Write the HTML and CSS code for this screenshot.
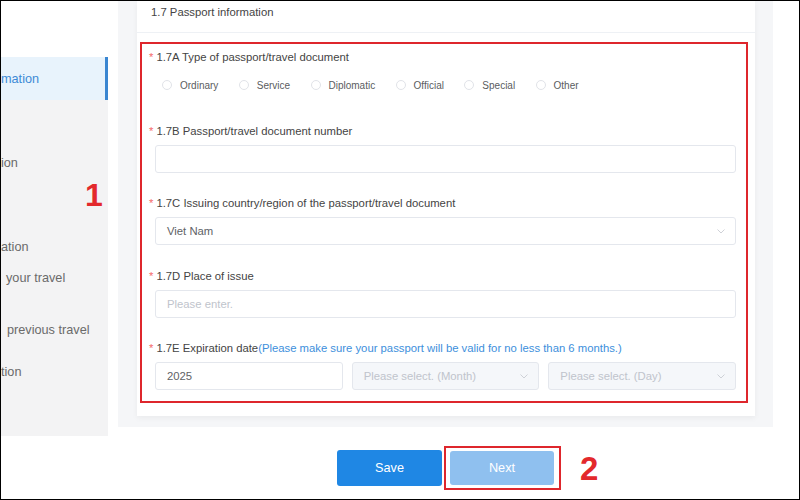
FILE: index.html
```html
<!DOCTYPE html>
<html lang="en">
<head>
<meta charset="utf-8">
<title>Passport information</title>
<link rel="stylesheet" href="styles.css">
</head>
<body>
<div class="frame">
  <aside class="sidebar">
    <div class="nav">
      <div class="nav-item active">mation</div>
      <div class="nav-item n2">ion</div>
      <div class="nav-item n3">ation</div>
      <div class="nav-item n4">your travel</div>
      <div class="nav-item n5">previous travel</div>
      <div class="nav-item n6">tion</div>
    </div>
  </aside>
  <main class="main">
    <div class="panel">
      <section class="card">
        <div class="card-head">1.7 Passport information</div>
        <div class="highlight">
          <div class="field">
            <div class="label"><span class="req">*</span>1.7A Type of passport/travel document</div>
            <div class="radios">
              <label class="radio"><span class="dot"></span>Ordinary</label>
              <label class="radio"><span class="dot"></span>Service</label>
              <label class="radio"><span class="dot"></span>Diplomatic</label>
              <label class="radio"><span class="dot"></span>Official</label>
              <label class="radio"><span class="dot"></span>Special</label>
              <label class="radio"><span class="dot"></span>Other</label>
            </div>
          </div>
          <div class="field">
            <div class="label"><span class="req">*</span>1.7B Passport/travel document number</div>
            <div class="input"></div>
          </div>
          <div class="field">
            <div class="label"><span class="req">*</span>1.7C Issuing country/region of the passport/travel document</div>
            <div class="input select"><span class="val">Viet Nam</span>
              <svg class="chev" width="8" height="5" viewBox="0 0 8 5"><polyline points="0.5,0.5 4,4 7.5,0.5" fill="none" stroke="#c9ccd2" stroke-width="0.9"/></svg>
            </div>
          </div>
          <div class="field">
            <div class="label"><span class="req">*</span>1.7D Place of issue</div>
            <div class="input"><span class="ph">Please enter.</span></div>
          </div>
          <div class="field">
            <div class="label"><span class="req">*</span>1.7E Expiration date<span class="hint">(Please make sure your passport will be valid for no less than 6 months.)</span></div>
            <div class="date-row">
              <div class="input"><span class="val">2025</span></div>
              <div class="input select disabled"><span class="ph">Please select. (Month)</span>
                <svg class="chev" width="8" height="5" viewBox="0 0 8 5"><polyline points="0.5,0.5 4,4 7.5,0.5" fill="none" stroke="#c9ccd2" stroke-width="0.9"/></svg>
              </div>
              <div class="input select disabled"><span class="ph">Please select. (Day)</span>
                <svg class="chev" width="8" height="5" viewBox="0 0 8 5"><polyline points="0.5,0.5 4,4 7.5,0.5" fill="none" stroke="#c9ccd2" stroke-width="0.9"/></svg>
              </div>
            </div>
          </div>
        </div>
      </section>
    </div>
    <div class="actions">
      <button class="btn save">Save</button>
      <div class="mark-box"><button class="btn next">Next</button></div>
      <span class="step step2">2</span>
    </div>
  </main>
  <span class="step step1">1</span>
</div>
</body>
</html>
```
FILE: styles.css
```css
* { box-sizing: border-box; }
html, body { margin: 0; padding: 0; background: #fff; }
body { font-family: "Liberation Sans", Arial, sans-serif; }

.frame {
  position: relative;
  width: 800px;
  height: 500px;
  border: 1px solid #000;
  display: flex;
  overflow: hidden;
  background: #fff;
}

/* Sidebar */
.sidebar {
  width: 107px;
  flex: none;
  padding-top: 56px;
  overflow: hidden;
}
.nav {
  height: 379px;
  background: #f3f3f4;
  font-size: 12.7px;
  color: #6a6a6a;
}
.nav-item {
  line-height: 18px;
  white-space: nowrap;
}
.nav-item.active {
  height: 43px;
  display: flex;
  align-items: center;
  background: #e8f3fc;
  border-right: 3px solid #3a86d1;
  color: #3d8ad6;
}
.nav-item.n2 { margin-top: 54px; }
.nav-item.n3 { margin-top: 66px; }
.nav-item.n4 { margin-top: 13px; height: 36px; padding-left: 5px; }
.nav-item.n5 { margin-top: 16px; height: 36px; padding-left: 6px; }
.nav-item.n6 { margin-top: 6px; }

/* Main */
.main {
  flex: 1;
  display: flex;
  flex-direction: column;
  padding-left: 10px;
}
.panel {
  width: 655px;
  background: #f5f6f8;
  padding: 0 18px 11px 19px;
}
.card {
  background: #fff;
  box-shadow: 0 2px 6px rgba(0, 0, 0, 0.05);
  padding-bottom: 13px;
}
.card-head {
  font-size: 11.3px;
  color: #444;
  line-height: 22px;
  padding: 0 0 9px 14px;
  border-bottom: 1px solid #eef1f5;
}
.highlight {
  margin: 9px 7px 0 3px;
  border: 2px solid #de262c;
  padding: 5px 10px 11px 7px;
}
.field + .field { padding-top: 22.5px; }
.label {
  font-size: 11.3px;
  line-height: 16px;
  color: #444;
  margin-bottom: 6px;
  white-space: nowrap;
}
.req {
  color: #f56c6c;
  margin-right: 3px;
}
.hint { color: #3d8fdc; }

.radios {
  display: flex;
  gap: 20.4px;
  margin-left: 13px;
  padding: 6px 0 7px;
  height: 29px;
  align-items: center;
}
.radio {
  display: flex;
  align-items: center;
  gap: 8px;
  font-size: 10px;
  color: #5a5c60;
}
.dot {
  width: 10px;
  height: 10px;
  border: 1px solid #e1e3e8;
  border-radius: 50%;
  background: #fff;
}

.input {
  margin-left: 6px;
  height: 28px;
  border: 1px solid #e4e7ed;
  border-radius: 3px;
  background: #fff;
  display: flex;
  align-items: center;
  padding: 0 11px;
  font-size: 11.3px;
  color: #606266;
}
.ph { color: #c0c4cc; }
.select { justify-content: space-between; }
.chev { flex: none; margin-right: -1px; }
.disabled { background: #f5f7fa; }

.date-row {
  display: flex;
  gap: 9px;
  margin-left: 6px;
}
.date-row .input {
  flex: 1;
  margin-left: 0;
  min-width: 0;
}

/* Actions */
.actions {
  display: flex;
  align-items: center;
  margin-top: 19px;
  padding-left: 219px;
}
.btn {
  font-family: inherit;
  font-size: 12.7px;
  color: #fff;
  border: 0;
  border-radius: 3px;
  cursor: pointer;
}
.save {
  width: 105px;
  height: 36px;
  background: #1f87e4;
}
.mark-box {
  margin-left: 2px;
  border: 2px solid #de262c;
  padding: 3px 5px 3px 4px;
  display: flex;
}
.next {
  width: 104px;
  height: 34px;
  background: #8fc0ef;
}
.step {
  font-weight: bold;
  color: #e3292c;
  line-height: 1;
}
.step2 {
  font-size: 33px;
  margin-left: 19px;
}
.step1 {
  position: absolute;
  left: 84px;
  top: 178px;
  font-size: 32px;
}
```
